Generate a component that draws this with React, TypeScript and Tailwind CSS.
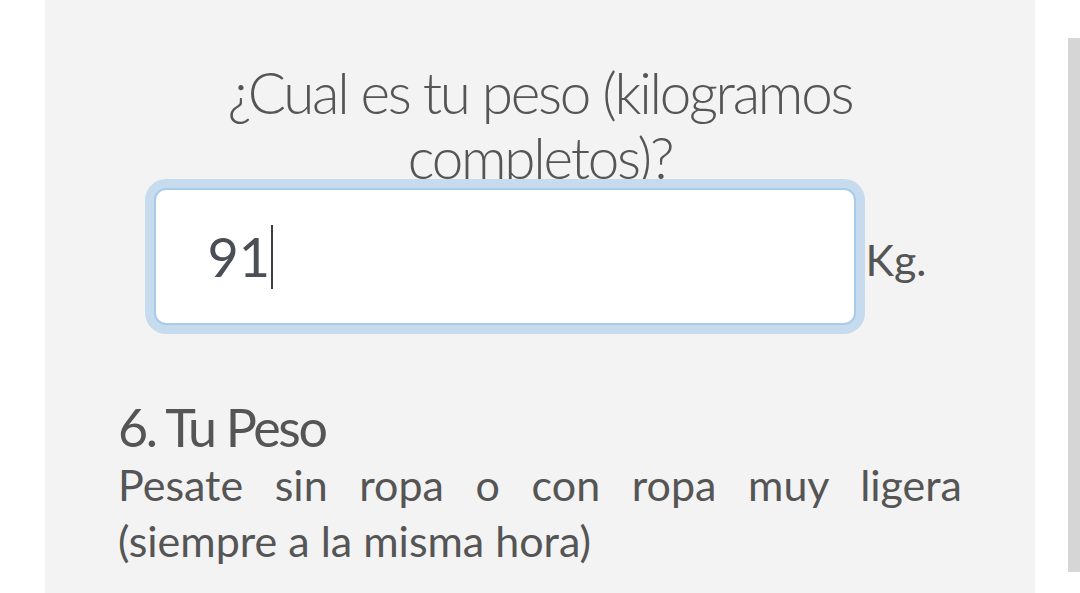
import React from "react";

export default function App() {
  return (
    <div className="relative w-[1080px] h-[593px] bg-white overflow-hidden flex font-['Lato',sans-serif]">
      <div className="ml-[45px] w-[990px] h-full bg-[#f3f3f3] px-[73px] pt-[60px] flex flex-col">
        <h1 className="text-center text-[56.6px] leading-[65px] font-light tracking-[-0.04em] text-[#555555]">
          ¿Cual es tu peso (kilogramos
          <br />
          completos)?
        </h1>
        <div className="mt-[-2px] flex items-center justify-center">
          <div className="w-[702px] h-[137px] bg-white border-2 border-[#a7cbe9] rounded-[12px] shadow-[0_0_0_9px_#c6dcee] flex items-center pl-[52px]">
            <span className="text-[54px] text-[#4a4f56] leading-none">91</span>
            <span className="ml-[1px] w-[2px] h-[64px] bg-[#3a3f46]" />
          </div>
          <span className="ml-[10px] pt-[8px] text-[43px] text-[#555555]">Kg.</span>
        </div>
        <h2 className="mt-[72px] text-[52px] leading-[60px] tracking-[-0.045em] text-[#555555]">
          6. Tu Peso
        </h2>
        <p className="text-[43px] leading-[56px] text-justify text-[#555555]">
          Pesate sin ropa o con ropa muy ligera (siempre a la misma hora)
        </p>
      </div>
      <div className="absolute right-0 top-[38px] w-[12px] h-[534px] bg-[#d6d6d6]" />
    </div>
  );
}
